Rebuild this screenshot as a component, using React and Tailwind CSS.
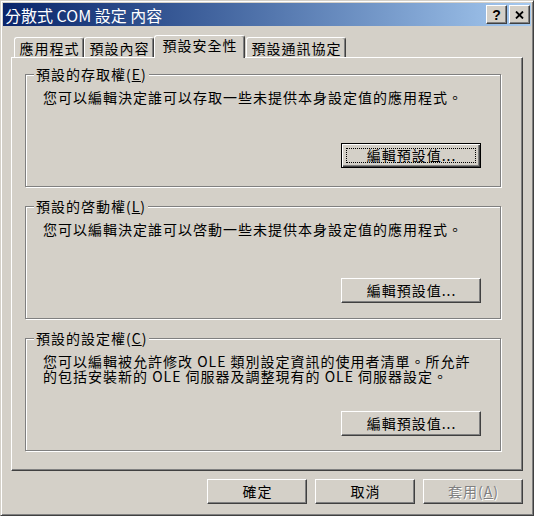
import React from "react";

const raised =
    "border border-t-white border-l-white border-r-[#404040] border-b-[#404040] shadow-[inset_-1px_-1px_0_#808080]";

function PushButton({children, isDefault, disabled, width = "w-[100px]"}) {
    const frame = isDefault
        ? "border border-black shadow-[inset_1px_1px_0_#fff,inset_-1px_-1px_0_#404040,inset_-2px_-2px_0_#808080]"
        : raised;
    return (
        <button
            type="button"
            className={`relative ${width} h-[25px] bg-[#d4d0c8] ${frame} flex items-center justify-center text-[14px] leading-[15px] tracking-[1px] ${
                disabled ? "text-[#808080] [text-shadow:1px_1px_0_#fff]" : "text-black"
            }`}
        >
            {isDefault && <span className="absolute inset-[4px] border border-dotted border-black"/>}
            <span className="pl-[1px]">{children}</span>
        </button>
    );
}

function Tab({label, active, width}) {
    return (
        <div
            className={`${width} flex items-center justify-center rounded-t-[3px] border-t border-l border-r border-t-white border-l-white border-r-[#404040] shadow-[inset_-1px_0_0_#808080] bg-[#d4d0c8] text-[14px] leading-[15px] tracking-[1px] ${
                active ? "relative z-10 h-[23px] -mb-px pb-[3px]" : "h-[20px] pt-[1px]"
            }`}
        >
            <span className="pl-[1px]">{label}</span>
        </div>
    );
}

function GroupBox({title, accel, lines, isDefault, bottomPad}) {
    return (
        <div className="relative flex h-[113px] w-[476px] flex-col border border-[#808080] shadow-[inset_1px_1px_0_#fff,1px_1px_0_#fff]">
            <div className="absolute left-[8px] top-[-8px] bg-[#d4d0c8] px-[2px] text-[14px] leading-[15px] tracking-[1px]">
                {title}(<span className="underline underline-offset-[1px]">{accel}</span>)
            </div>
            <div className="flex flex-col pl-[17px] pt-[15px] text-[14px] leading-[15px] tracking-[1px]">
                {lines.map((line) => (
                    <div key={line} className="h-[15px] whitespace-nowrap">{line}</div>
                ))}
            </div>
            <div className={`mt-auto flex justify-end pr-[19px] ${bottomPad}`}>
                <PushButton isDefault={isDefault} width="w-[140px]">編輯預設值...</PushButton>
            </div>
        </div>
    );
}

export default function App() {
    return (
        <div className="h-[516px] w-[534px] bg-[#d4d0c8] font-['Noto_Sans_CJK_TC','Noto_Sans_CJK_SC',sans-serif] text-black">
            <div className="flex h-full w-full flex-col border border-t-[#d4d0c8] border-l-[#d4d0c8] border-r-[#404040] border-b-[#404040] p-[2px] shadow-[inset_1px_1px_0_#fff,inset_-1px_-1px_0_#808080]">
                {/* title bar */}
                <div className="flex h-[23px] shrink-0 items-center bg-linear-to-r from-[#0a246a] to-[#a6caf0] pl-[2px] pr-[1px]">
                    <span className="text-[16px] leading-[18px] text-white">分散式 COM 設定 內容</span>
                    <div className="ml-auto flex gap-[2px]">
                        <div className={`flex h-[19px] w-[21px] items-center justify-center bg-[#d4d0c8] ${raised}`}>
                            <span className="font-['Liberation_Sans',sans-serif] text-[14px] font-bold leading-none">?</span>
                        </div>
                        <div className={`flex h-[19px] w-[21px] items-center justify-center bg-[#d4d0c8] ${raised}`}>
                            <svg width="9" height="8" viewBox="0 0 9 8">
                                <path d="M1 0.5 L8 7.5 M8 0.5 L1 7.5" stroke="#000" strokeWidth="1.8"/>
                            </svg>
                        </div>
                    </div>
                </div>

                {/* body */}
                <div className="flex flex-1 flex-col px-[8px] pt-[9px]">
                    <div className="flex items-end pl-[3px]">
                        <Tab label="應用程式" width="w-[70px]"/>
                        <Tab label="預設內容" width="w-[70px]"/>
                        <Tab label="預設安全性" width="w-[91px]" active/>
                        <div className="ml-[1px]">
                            <Tab label="預設通訊協定" width="w-[100px]"/>
                        </div>
                    </div>

                    <div className="flex h-[414px] flex-col gap-[19px] border border-t-white border-l-white border-r-[#404040] border-b-[#404040] pl-[13px] pt-[16px] shadow-[inset_-1px_-1px_0_#808080]">
                        <GroupBox
                            title="預設的存取權"
                            accel="E"
                            isDefault
                            bottomPad="pb-[18px]"
                            lines={["您可以編輯決定誰可以存取一些未提供本身設定值的應用程式。"]}
                        />
                        <GroupBox
                            title="預設的啓動權"
                            accel="L"
                            bottomPad="pb-[15px]"
                            lines={["您可以編輯決定誰可以啓動一些未提供本身設定值的應用程式。"]}
                        />
                        <GroupBox
                            title="預設的設定權"
                            accel="C"
                            bottomPad="pb-[14px]"
                            lines={[
                                "您可以編輯被允許修改 OLE 類別設定資訊的使用者清單。所允許",
                                "的包括安裝新的 OLE 伺服器及調整現有的 OLE 伺服器設定。",
                            ]}
                        />
                    </div>

                    <div className="mt-[8px] flex justify-end gap-[8px]">
                        <PushButton>確定</PushButton>
                        <PushButton>取消</PushButton>
                        <PushButton disabled>
                            套用(<span className="underline underline-offset-[1px]">A</span>)
                        </PushButton>
                    </div>
                </div>
            </div>
        </div>
    );
}
